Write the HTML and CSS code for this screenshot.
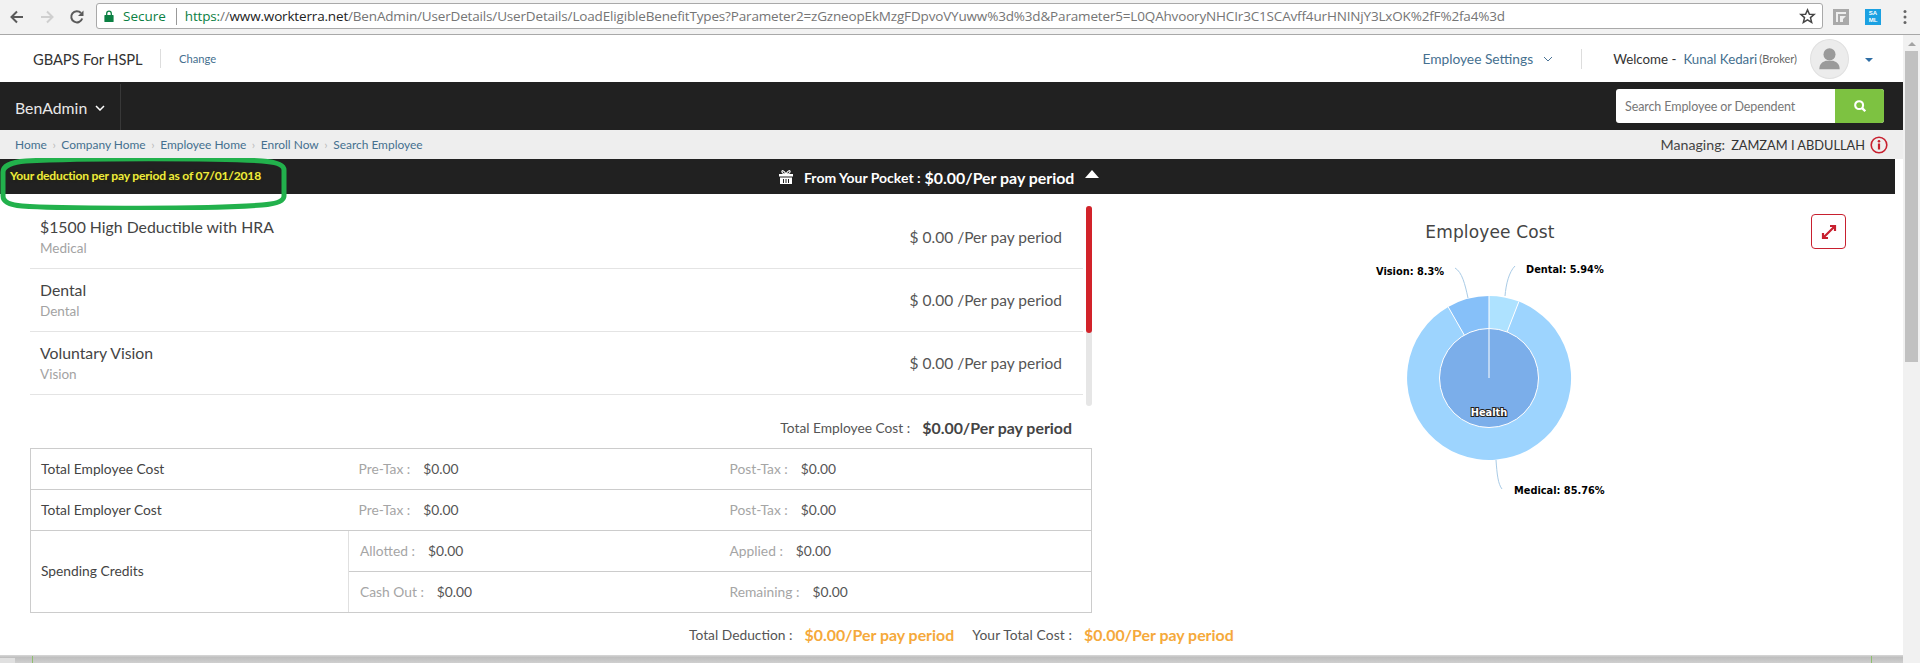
FILE: index.html
```html
<!DOCTYPE html>
<html lang="en">
<head>
<meta charset="utf-8">
<title>BenAdmin</title>
<link rel="stylesheet" href="styles.css">
</head>
<body>
<div class="chrome">
  <svg class="nav-ico back" viewBox="0 0 16 16"><path d="M14 8H3M8 2.5 2.5 8 8 13.5" fill="none" stroke="#5a5a5a" stroke-width="2"/></svg>
  <svg class="nav-ico fwd" viewBox="0 0 16 16"><path d="M2 8h11M8 2.5 13.5 8 8 13.5" fill="none" stroke="#cfcfcf" stroke-width="2"/></svg>
  <svg class="nav-ico reload" viewBox="0 0 16 16"><path d="M13.2 9.5A5.6 5.6 0 1 1 12 4" fill="none" stroke="#5a5a5a" stroke-width="2"/><path d="M14.5 1.5v5.5H9z" fill="#5a5a5a"/></svg>
  <div class="omnibox">
    <svg class="lock" viewBox="0 0 10 12"><path d="M1 5h8a.6.6 0 0 1 .6.6v5.8a.6.6 0 0 1-.6.6H1a.6.6 0 0 1-.6-.6V5.600A.6.6 0 0 1 1 5z" fill="#0b8043"/><path d="M2.700 5.500V3.500a2.300 2.300 0 0 1 4.600 0v2" fill="none" stroke="#0b8043" stroke-width="1.300"/></svg>
    <span class="secure">Secure</span>
    <span class="omni-sep"></span>
    <span class="url"><span class="url-s">https:</span>//<span class="url-d">www.workterra.net</span>/BenAdmin/UserDetails/UserDetails/LoadEligibleBenefitTypes?Parameter2=zGzneopEkMzgFDpvoVYuww%3d%3d&amp;Parameter5=L0QAhvooryNHCIr3C1SCAvff4urHNINjY3LxOK%2fF%2fa4%3d</span>
    <svg class="star" viewBox="0 0 16 16"><path d="M8 1.800 9.800 6h4.500l-3.500 3 1.100 4.500L8 11.100 4.100 13.500 5.200 9 1.700 6h4.500z" fill="none" stroke="#444" stroke-width="1.400"/></svg>
  </div>
  <svg class="ext" viewBox="0 0 16 16"><rect width="16" height="16" fill="#a9a9a9"/><path d="M3 3h10v2H5v8H3zM7 7h6l-3 3v3H7z" fill="#eee"/></svg>
  <span class="ext-saml">SA<br>ML</span>
  <svg class="dots" viewBox="0 0 4 16"><circle cx="2" cy="2.500" r="1.500" fill="#666"/><circle cx="2" cy="8" r="1.500" fill="#666"/><circle cx="2" cy="13.500" r="1.500" fill="#666"/></svg>
</div>

<div class="app">
  <div class="page">
    <header class="top">
      <span class="company">GBAPS For HSPL</span>
      <span class="top-sep"></span>
      <a class="change">Change</a>
      <a class="settings">Employee Settings</a>
      <svg class="settings-chev" viewBox="0 0 10 6"><path d="M1 1l4 4 4-4" fill="none" stroke="#4a7396" stroke-width="1"/></svg>
      <span class="top-sep2"></span>
      <span class="welcome">Welcome -</span>
      <a class="user">Kunal Kedari</a>
      <span class="role">(Broker)</span>
      <span class="avatar"><svg viewBox="0 0 40 40"><circle cx="20" cy="15" r="6.500" fill="#9a9a9a"/><path d="M9 31c0-6 4-8 7-9h8c3 1 7 3 7 9z" fill="#9a9a9a"/></svg></span>
      <span class="caret"></span>
    </header>

    <nav class="nav">
      <div class="nav-brand">BenAdmin
        <svg viewBox="0 0 10 6"><path d="M1 1l4 4 4-4" fill="none" stroke="#fff" stroke-width="1.500"/></svg>
      </div>
      <div class="search">
        <span class="search-input">Search Employee or Dependent</span>
        <span class="search-btn"><svg viewBox="0 0 16 16"><circle cx="7" cy="7" r="4.500" fill="none" stroke="#fff" stroke-width="2.400"/><path d="M10.500 10.500 14 14" stroke="#fff" stroke-width="2.800"/></svg></span>
      </div>
    </nav>

    <div class="crumbs">
      <a>Home</a><i>›</i><a>Company Home</a><i>›</i><a>Employee Home</a><i>›</i><a>Enroll Now</a><i>›</i><a>Search Employee</a>
      <span class="managing">Managing:</span>
      <span class="managed">ZAMZAM I ABDULLAH</span>
      <svg class="info" viewBox="0 0 18 18"><circle cx="9" cy="9" r="7.800" fill="none" stroke="#c8202f" stroke-width="1.600"/><circle cx="9" cy="5.200" r="1.300" fill="#c8202f"/><rect x="7.900" y="7.500" width="2.200" height="6" fill="#c8202f"/></svg>
    </div>

    <div class="summary">
      <span class="summary-note">Your deduction per pay period as of 07/01/2018</span>
      <svg class="gift" viewBox="0 0 16 16"><path d="M1 5h14v2.500H1zM2 8.500h12V15H2z" fill="#fff"/><path d="M5.500 10v4M8 10v4M10.500 10v4" stroke="#212121" stroke-width="1"/><path d="M8 5C6 1 3.500 1 4 3c.2 1 2 2 4 2 2 0 3.800-1 4-2 .5-2-2-2-4 2z" fill="none" stroke="#fff" stroke-width="1.200"/></svg>
      <span class="pocket">From Your Pocket :</span>
      <span class="pocket-val">$0.00/Per pay period</span>
      <span class="tri"></span>
    </div>
    <svg class="marker" viewBox="0 0 290 52"><path d="M26 3C80 0 220 0 262 3c14 1 22 4 22 9v26c0 5-8 8-22 9-50 4-200 4-240 1C10 47 3 44 3 38V14C3 8 12 4 26 3z" fill="none" stroke="#22b14c" stroke-width="5"/></svg>

    <main class="content">
      <section class="left">
        <div class="plans">
          <ul class="plan-list">
            <li class="plan"><div><div class="plan-name">$1500 High Deductible with HRA</div><div class="plan-type">Medical</div></div><div class="plan-cost">$ 0.00 /Per pay period</div></li>
            <li class="plan"><div><div class="plan-name">Dental</div><div class="plan-type">Dental</div></div><div class="plan-cost">$ 0.00 /Per pay period</div></li>
            <li class="plan"><div><div class="plan-name">Voluntary Vision</div><div class="plan-type">Vision</div></div><div class="plan-cost">$ 0.00 /Per pay period</div></li>
          </ul>
          <div class="plan-scroll"><div class="plan-thumb"></div></div>
        </div>
        <div class="total-row"><span class="lbl">Total Employee Cost :</span><strong>$0.00/Per pay period</strong></div>
        <table class="costs">
          <colgroup><col class="c1"><col class="c2"><col class="c3"></colgroup>
          <tr><td class="name">Total Employee Cost</td><td><span class="k">Pre-Tax :</span><span class="v">$0.00</span></td><td><span class="k">Post-Tax :</span><span class="v">$0.00</span></td></tr>
          <tr><td class="name">Total Employer Cost</td><td><span class="k">Pre-Tax :</span><span class="v">$0.00</span></td><td><span class="k">Post-Tax :</span><span class="v">$0.00</span></td></tr>
          <tr><td class="name div" rowspan="2">Spending Credits</td><td class="inner"><span class="k">Allotted :</span><span class="v">$0.00</span></td><td><span class="k">Applied :</span><span class="v">$0.00</span></td></tr>
          <tr><td class="inner"><span class="k">Cash Out :</span><span class="v">$0.00</span></td><td><span class="k">Remaining :</span><span class="v">$0.00</span></td></tr>
        </table>
        <div class="deduction">
          <span class="lbl">Total Deduction :</span><strong>$0.00/Per pay period</strong>
          <span class="lbl second">Your Total Cost :</span><strong>$0.00/Per pay period</strong>
        </div>
      </section>
      <section class="right">
        <svg class="chart" viewBox="0 0 811 300" width="811" height="300">
          <text class="chart-title" x="398" y="44" text-anchor="middle">Employee Cost</text>
          <g transform="translate(397,184)">
            <path d="M0 -82A82 82 0 0 1 29.900 -76.400L18.100 -46.100A49.500 49.500 0 0 0 0 -49.500Z" fill="#aee2ff"/>
            <path d="M29.900 -76.400A82 82 0 1 1 -40.800 -71.100L-24.700 -42.900A49.500 49.500 0 1 0 18.100 -46.100Z" fill="#9dd4fe"/>
            <path d="M-40.800 -71.100A82 82 0 0 1 0 -82V-49.500A49.500 49.500 0 0 0 -24.700 -42.900Z" fill="#86c0f9"/>
            <g stroke="#fff" stroke-width="1" fill="none">
              <path d="M0 -82V0"/>
              <path d="M29.900 -76.400 18.100 -46.100"/>
              <path d="M-40.800 -71.100 -24.700 -42.900"/>
            </g>
            <circle r="49.500" fill="#7baeea" stroke="#fff" stroke-width="1"/>
            <path d="M0 -49.500V0" stroke="#fff" stroke-width="1"/>
            <text class="health" x="0" y="38" text-anchor="middle">Health</text>
          </g>
          <g fill="none" stroke="#a9cbe6" stroke-width="1">
            <path d="M363 74C370 78 373 90 376 104"/>
            <path d="M423 72C417 78 414 90 413 102"/>
            <path d="M404 266C405 280 406 290 410 295"/>
          </g>
          <text class="chart-label" x="284" y="81">Vision: 8.3%</text>
          <text class="chart-label" x="434" y="79">Dental: 5.94%</text>
          <text class="chart-label" x="422" y="301" dy="-1">Medical: 85.76%</text>
        </svg>
        <span class="expand"><svg viewBox="0 0 18 18"><path d="M3 15 15 3M10 3h5v5M3 10v5h5" fill="none" stroke="#c8202f" stroke-width="2.200"/></svg></span>
      </section>
    </main>
    <div class="page-edge"></div>
  </div>
  <aside class="vscroll"><span class="vscroll-up"></span><span class="vscroll-thumb"></span></aside>
</div>
</body>
</html>
```

FILE: styles.css
```css
* { box-sizing: border-box; }
html, body { margin: 0; height: 663px; overflow: hidden; background: #fff; }
body { font-family: Lato, "Liberation Sans", sans-serif; color: #3c3c3c; font-size: 13px; }
a { color: #45708f; text-decoration: none; }
ul { list-style: none; margin: 0; padding: 0; }

/* browser chrome */
.chrome { height: 35px; background: #f2f2f2; border-bottom: 1px solid #a8a8a8; display: flex; align-items: center; position: relative; padding-left: 9px; }
.nav-ico { width: 16px; height: 16px; margin-right: 14px; flex: none; }
.reload { margin-right: 11px; }
.omnibox { width: 1727px; height: 26px; margin-top: -2px; background: #fff; border: 1px solid #a9a9a9; border-radius: 3px; display: flex; align-items: center; padding-left: 7px; font-family: "Open Sans", sans-serif; font-size: 13.500px; }
.lock { width: 10px; height: 12px; margin-right: 9px; flex: none; }
.secure { color: #0b8043; }
.omni-sep { width: 1px; height: 17px; background: #999; margin: 0 8px 0 10px; }
.url { color: #757575; white-space: nowrap; flex: 1; letter-spacing: -.165px; }
.url-s { color: #0b8043; }
.url-d { color: #222; }
.star { width: 17px; height: 17px; margin-right: 6px; flex: none; }
.ext { width: 16px; height: 16px; margin-left: 10px; flex: none; }
.ext-saml { width: 16px; height: 16px; margin-left: 16px; background: #1ba1e2; color: #fff; font: bold 6px/7px "Liberation Sans", sans-serif; text-align: center; padding-top: 1px; flex: none; }
.dots { width: 4px; height: 16px; margin-left: 22px; flex: none; }

.app { display: flex; height: 628px; }
.page { width: 1903px; flex: none; position: relative; display: flex; flex-direction: column; }

/* top header */
.top { height: 47px; display: flex; align-items: center; padding-left: 33px; flex: none; }
.company { font-size: 14.700px; width: 127px; color: #333; letter-spacing: -.1px; white-space: nowrap; }
.top-sep { width: 1px; height: 19px; background: #ddd; }
.change { font-size: 11.200px; margin-left: 18px; }
.settings { font-size: 13.750px; margin-left: auto; }
.settings-chev { width: 10px; height: 6px; margin-left: 10px; }
.top-sep2 { width: 1px; height: 20px; background: #ddd; margin: 0 31px 0 28px; }
.welcome { font-size: 13.300px; color: #333; }
.user { font-size: 13.300px; margin-left: 7px; }
.role { font-size: 11px; color: #666; margin-left: 2px; }
.avatar { width: 39px; height: 40px; border-radius: 50%; background: #ececec; border: 1px solid #e0e0e0; margin-left: 13px; display: flex; }
.avatar svg { width: 37px; height: 38px; }
.caret { width: 0; height: 0; border: 4px solid transparent; border-top: 4px solid #2f6ea5; border-bottom: 0; margin: 2px 30px 0 16px; }

/* dark nav */
.nav { height: 48px; background: #212121; display: flex; align-items: center; justify-content: space-between; flex: none; padding-right: 19px; }
.nav-brand { height: 46px; width: 121px; border-right: 1px solid #383838; color: #e8e8e8; font-size: 15.800px; padding-left: 15px; display: flex; align-items: center; gap: 8px; margin-top: 2px; }
.nav-brand svg { width: 10px; height: 6px; margin-top: 2px; }
.search { width: 268px; height: 34px; margin-right: 0; display: flex; border-radius: 3px; overflow: hidden; background: #fff; }
.search-input { flex: 1; font-size: 12.500px; letter-spacing: -.1px; color: #777; padding-left: 9px; line-height: 36px; white-space: nowrap; }
.search-btn { width: 49px; background: #7dc241; display: flex; align-items: center; justify-content: center; }
.search-btn svg { width: 14px; height: 14px; }

/* breadcrumb */
.crumbs { height: 29px; background: #eee; display: flex; align-items: center; padding-left: 15px; font-size: 11.950px; flex: none; }
.crumbs i { font-style: normal; color: #bbb; width: 14.500px; text-align: center; }
.managing { margin-left: auto; font-size: 14.200px; color: #444; }
.managed { font-size: 12.800px; color: #333; margin-left: 6px; }
.info { width: 18px; height: 18px; margin: 0 15px 0 5px; }

/* summary bar */
.summary { height: 35px; margin-right: 8px; background: #212121; color: #fff; display: flex; align-items: center; padding-left: 10px; flex: none; }
.summary-note { width: 768px; color: #f0ec3d; font-size: 12.100px; font-weight: 700; margin-top: -3px; text-shadow: 0 0 3px #2e2e00; letter-spacing: -.2px; white-space: nowrap; }
.gift { width: 16px; height: 16px; margin-right: 10px; }
.pocket { font-size: 14px; font-weight: 700; margin-top: 1px; }
.pocket-val { font-size: 15.900px; font-weight: 700; margin-left: 4px; margin-top: 1px; }
.tri { width: 0; height: 0; border: 7.500px solid transparent; border-bottom: 8px solid #fff; border-top: 0; margin-left: 11px; margin-top: -6px; }
.marker { position: absolute; left: 0; top: 123px; width: 290px; height: 52px; }

/* content */
.content { flex: 1; display: flex; min-height: 0; }
.left { width: 1092px; padding-left: 30px; padding-top: 12px; flex: none; }
.plans { display: flex; height: 200px; }
.plan-list { width: 1053px; }
.plan { height: 63px; border-bottom: 1px solid #e4e4e4; display: flex; justify-content: space-between; padding: 11px 21px 0 10px; }
.plan-name { font-size: 15.800px; line-height: 20px; color: #444; }
.plan-type { font-size: 13.500px; line-height: 20px; color: #a3a3a3; margin-top: 1px; }
.plan-cost { font-size: 15.500px; color: #555; line-height: 20px; margin-top: 10px; }
.plan-scroll { width: 6px; margin-left: 3px; height: 200px; background: #e6e6e6; border-radius: 3px; }
.plan-thumb { height: 127px; background: #d2232a; border-radius: 3px; }
.total-row { height: 42px; display: flex; justify-content: flex-end; align-items: center; padding-right: 20px; }
.total-row .lbl { font-size: 13.750px; color: #555; margin-right: 12px; }
.total-row strong { font-size: 15.900px; color: #444; }
.costs { width: 1062px; height: 165px; border-collapse: collapse; table-layout: fixed; font-size: 13.800px; }
.costs .c1 { width: 318px; }
.costs .c2 { width: 371px; }
.costs td { border-top: 1px solid #ccc; border-bottom: 1px solid #ccc; padding: 0 0 2px 10px; height: 41px; }
.costs tr td:first-child { border-left: 1px solid #ccc; }
.costs tr td:last-child { border-right: 1px solid #ccc; }
.costs .name { color: #444; }
.costs .div { border-right: 1px solid #e0e0e0; padding-bottom: 3px; }
.costs .inner { padding-left: 11px; }
.k { color: #a5a5a5; }
.v { color: #555; margin-left: 13px; }
.deduction { height: 43px; display: flex; align-items: center; padding-left: 659px; white-space: nowrap; }
.deduction .lbl { font-size: 13.800px; color: #555; margin-right: 12px; }
.deduction .second { margin-left: 18px; letter-spacing: .1px; }
.deduction strong { font-size: 15.900px; color: #f5a93b; }

/* chart column */
.right { flex: 1; position: relative; }
.chart { display: block; overflow: visible; }
.chart-title { font: 17px "DejaVu Sans", sans-serif; fill: #444; letter-spacing: .15px; }
.chart-label { font: bold 9.800px "DejaVu Sans", sans-serif; fill: #000; }
.health { font: bold 9.800px "DejaVu Sans", sans-serif; fill: #fff; stroke: #222; stroke-width: 2px; paint-order: stroke; }
.expand { position: absolute; left: 719px; top: 20px; width: 35px; height: 35px; border: 1px solid #c8202f; border-radius: 4px; display: flex; align-items: center; justify-content: center; }
.expand svg { width: 18px; height: 18px; }

/* bottom edge of the card, cut off by the window */
.page-edge { height: 8px; flex: none; background:
  linear-gradient(#8fbf6f, #8fbf6f) 32px 1px / 1px 7px no-repeat,
  linear-gradient(#8fbf6f, #8fbf6f) 1871px 1px / 1px 7px no-repeat,
  linear-gradient(#e0e0e0, #e0e0e0) 0 3px / 15px 5px no-repeat,
  linear-gradient(#d8d8d8, #bfbfbf 30%, #cfcfcf); }

/* page scrollbar */
.vscroll { width: 17px; flex: none; background: #f1f1f1; display: flex; flex-direction: column; align-items: center; }
.vscroll-up { width: 0; height: 0; border: 4px solid transparent; border-bottom: 4px solid #a3a3a3; border-top: 0; margin: 7px 0 5px; }
.vscroll-thumb { width: 13px; height: 311px; background: #c1c1c1; }
```
